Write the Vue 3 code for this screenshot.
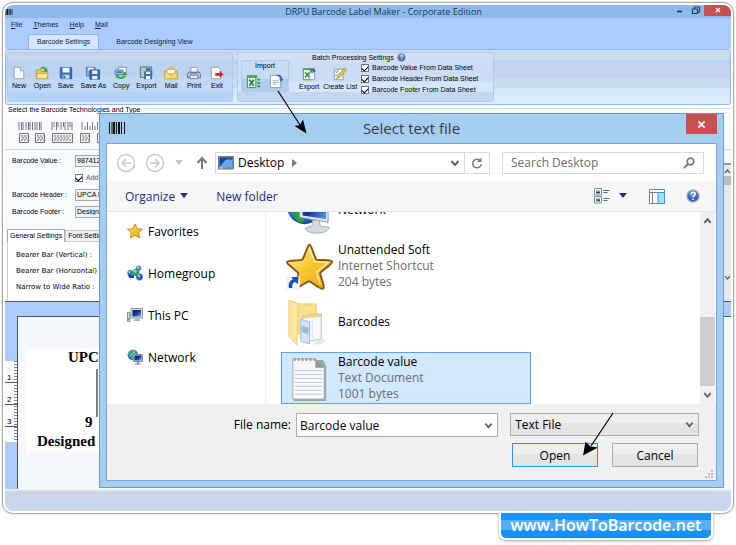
<script setup>
import { ref } from 'vue'

const menus = ['File', 'Themes', 'Help', 'Mail']
const fileTools = [
  { label: 'New', icon: 'page' },
  { label: 'Open', icon: 'open' },
  { label: 'Save', icon: 'disk' },
  { label: 'Save As', icon: 'disks' },
  { label: 'Copy', icon: 'copy' },
  { label: 'Export', icon: 'export' },
  { label: 'Mail', icon: 'mail' },
  { label: 'Print', icon: 'print' },
  { label: 'Exit', icon: 'exit' },
]
const sheetOptions = ref([
  { label: 'Barcode Value From Data Sheet', on: true },
  { label: 'Barcode Header From Data Sheet', on: true },
  { label: 'Barcode Footer From Data Sheet', on: true },
])
const addChecksum = ref(true)
const barcodeValue = ref('9874126')
const barcodeHeader = ref('UPCA B')
const barcodeFooter = ref('Designed')
const bearerLabels = ['Bearer Bar (Vertical) :', 'Bearer Bar (Horizontal)', 'Narrow to Wide Ratio :']
const places = [
  { label: 'Favorites', icon: 'star' },
  { label: 'Homegroup', icon: 'homegroup' },
  { label: 'This PC', icon: 'pc' },
  { label: 'Network', icon: 'network' },
]
const files = [
  { name: 'Network', icon: 'bignetwork', details: [] },
  { name: 'Unattended Soft', icon: 'bigstar', details: ['Internet Shortcut', '204 bytes'] },
  { name: 'Barcodes', icon: 'folder', details: [] },
  { name: 'Barcode value', icon: 'notepad', details: ['Text Document', '1001 bytes'], selected: true },
]
const fileName = ref('Barcode value')
const fileType = ref('Text File')
const search = ref('')
</script>

<template>
  <svg class="sprites" aria-hidden="true">
    <defs>
      <linearGradient id="gold" x1="0" y1="0" x2="1" y2="1">
        <stop offset="0" stop-color="#fff1a0" /><stop offset=".5" stop-color="#f8c62e" /><stop offset="1" stop-color="#eda413" />
      </linearGradient>
      <linearGradient id="screen" x1="0" y1="0" x2="1" y2="1">
        <stop offset="0" stop-color="#0b1c63" /><stop offset=".5" stop-color="#12379b" /><stop offset="1" stop-color="#6aa3ea" />
      </linearGradient>
      <radialGradient id="globe" cx=".4" cy=".3" r=".8">
        <stop offset="0" stop-color="#a9dcf5" /><stop offset=".6" stop-color="#2a6fc9" /><stop offset="1" stop-color="#123a8f" />
      </radialGradient>
      <radialGradient id="help" cx=".5" cy=".3" r=".7">
        <stop offset="0" stop-color="#6d9fe0" /><stop offset="1" stop-color="#1c48a0" />
      </radialGradient>
      <linearGradient id="sheet" x1="0" y1="0" x2="0" y2="1">
        <stop offset="0" stop-color="#f4f4f4" /><stop offset="1" stop-color="#ffffff" />
      </linearGradient>
    </defs>
    <symbol id="page" viewBox="0 0 16 16">
      <path d="M2.5 1.5h7l4 4v9h-11z" fill="#fdfdfe" stroke="#8e99ad" /><path d="M9.500 1.500v4h4" fill="#dde4ee" stroke="#8e99ad" />
    </symbol>
    <symbol id="open" viewBox="0 0 16 16">
      <path d="M1.500 4.500h5l1 2h7v8h-13z" fill="#f3c955" stroke="#c9962b" /><path d="M3 8.500h12l-2 6h-11.500z" fill="#fde798" stroke="#d2a339" />
      <path d="M5 4c2-4 6-4 7.500-1l1.500-1v5l-4.500-1 1.500-1.500c-1-2-3-2-6-.5z" fill="#35a83a" />
    </symbol>
    <symbol id="disk" viewBox="0 0 16 16">
      <path d="M1.500 2h13v12.500h-12l-1-1z" fill="#3571c1" stroke="#24508f" /><path d="M4 2h8v5.500h-8z" fill="#f4f8fd" /><path d="M4 10h8v4.500h-8z" fill="#c8d7ea" /><path d="M5 11h2v3h-2z" fill="#254b83" />
    </symbol>
    <symbol id="disks" viewBox="0 0 18 16">
      <path d="M1.500 1.500h10v10h-10z" fill="#83addd" stroke="#4879b9" /><path d="M3.500 2h6v3h-6z" fill="#f5f9fd" />
      <path d="M5.500 4.500h11v10.500h-11z" fill="#3571c1" stroke="#24508f" /><path d="M8 5h6v4h-6zM8 11.500h6v3.500h-6z" fill="#eef4fb" />
    </symbol>
    <symbol id="copy" viewBox="0 0 16 16">
      <path d="M5 1.500h9v6h-9z" fill="#fafcff" stroke="#7387a5" /><path d="M1.500 4.500h9v5h-9z" fill="#bdd2ea" stroke="#52709b" /><path d="M3 6h6v2h-6z" fill="#3a6aa9" />
      <path d="M2 10h4l-1 1.500c2 1.500 5 1 6-1.500l-1.500-.5 4-3 2 4-1.500-.3c-1.500 5-7 6-10.500 2.800l-1.500 1z" fill="#34b344" />
    </symbol>
    <symbol id="export" viewBox="0 0 16 16">
      <path d="M1.500 1h13v12h-13z" fill="#9cc0e6" stroke="#3c69a8" /><path d="M3 3h4v3h-4zM3 8h3v4h-3z" fill="#f1c84b" /><path d="M8 2.500h5v3h-5z" fill="#3d6bb0" />
      <path d="M6 6h9v9h-9z" fill="#2e65b4" /><path d="M8 6.500h5v3h-5zM8 11.500h5v3.500h-5z" fill="#f2f7fc" />
    </symbol>
    <symbol id="mail" viewBox="0 0 16 16">
      <path d="M1 6l7-5 7 5v8.500h-14z" fill="#f6cc50" stroke="#d8992a" /><path d="M3.500 4h9v5h-9z" fill="#fff" stroke="#d3ad57" /><path d="M1 6.500l7 4.500 7-4.500v8h-14z" fill="#fbd96c" stroke="#d8992a" stroke-width=".7" />
    </symbol>
    <symbol id="print" viewBox="0 0 16 16">
      <path d="M4.500 1.500h7v6h-7z" fill="#fff" stroke="#8b98ad" /><path d="M2 7h12l1.500 2.500v4h-15v-4z" fill="#b9c4d4" stroke="#5a687c" /><path d="M3.500 10.500h9v4h-9z" fill="#e8edf4" stroke="#68768d" /><path d="M4 8h8" stroke="#4f6180" />
    </symbol>
    <symbol id="exit" viewBox="0 0 16 16">
      <path d="M1.500 1.500h8l3 3v10h-11z" fill="#fdfdfd" stroke="#919aab" /><path d="M6 8h5v-2.500l4.500 4-4.500 4v-2.500h-5z" fill="#c62b22" />
    </symbol>
    <symbol id="excel" viewBox="0 0 16 16">
      <path d="M1 1h11v3h-11z" fill="#58aa58" /><path d="M1.500 3.500h9v11h-9z" fill="#f0faf0" stroke="#3a923f" /><path d="M3.500 6l5 6.500m0-6.500l-5 6.500" stroke="#2d8436" stroke-width="1.800" /><path d="M12 5h3v2h-3zM12 8.500h3v2h-3zM12 12h3v2h-3z" fill="#37943d" />
    </symbol>
    <symbol id="importpage" viewBox="0 0 16 16">
      <path d="M1.500 1.500h8l3 3v10h-11z" fill="#fff" stroke="#8d9bb2" /><path d="M4 7h6M4 9h6M4 11h4" stroke="#9bb0cd" /><path d="M8 1c4-1 6 1 6 4h1.500l-2.500 3.500-2.500-3.500h1.500c0-2-1-3-4-3z" fill="#2d67b9" />
    </symbol>
    <symbol id="excelout" viewBox="0 0 16 16">
      <path d="M1 1h13v2.500h-13z" fill="#58aa58" /><path d="M1.500 3h9v11.500h-9z" fill="#f0faf0" stroke="#3a923f" /><path d="M3.500 6l5 6m0-6l-5 6" stroke="#2d8436" stroke-width="1.500" /><path d="M8.500 6.500h6v8h-6z" fill="#f8fbff" stroke="#7d9cc6" /><path d="M9 5c1-3 3-3 4-2l1-1.500 1.500 4-4 .5 1-1.200c-1-1-2-.5-2 1z" fill="#2d67b9" />
    </symbol>
    <symbol id="list" viewBox="0 0 16 16">
      <path d="M1.500 2.500h10v12h-10z" fill="#fff" stroke="#8090a8" /><path d="M3 5l1 1.500 2-3M3 9l1 1.500 2-3M3 12.500l1 1 2-2.500" fill="none" stroke="#2a8f3a" /><path d="M7 7h3M7 10h2" stroke="#7890b4" /><path d="M13 1l2.500 2-7 8.500-2.500 1 .5-3z" fill="#f1c23c" stroke="#a5752b" stroke-width=".7" />
    </symbol>
    <symbol id="bars" viewBox="0 0 16 12">
      <path d="M.500 0v12M3 0v12M7.500 0v12M12.500 0v12M15.500 0v12" stroke="#111" /><path d="M5 0v12M10 0v12" stroke="#111" stroke-width="2" />
    </symbol>
    <symbol id="question" viewBox="0 0 16 16">
      <circle cx="8" cy="8" r="7" fill="url(#help)" stroke="#a8b2c4" stroke-width="1.500" /><path d="M5.800 6.200c0-3.400 4.900-3 4.700-.4-.1 1.500-2.400 1.600-2.400 3.700" fill="none" stroke="#fff" stroke-width="1.600" /><path d="M7.200 11h1.800v1.600h-1.800z" fill="#fff" />
    </symbol>
    <symbol id="chevdown" viewBox="0 0 10 10"><path d="M1.500 3l3.500 4 3.500-4" fill="none" stroke="#606368" stroke-width="2" /></symbol>
    <symbol id="chevup" viewBox="0 0 10 10"><path d="M1.500 7l3.500-4 3.500 4" fill="none" stroke="#55595f" stroke-width="2" /></symbol>
    <symbol id="caret" viewBox="0 0 10 6"><path d="M1 0h8l-4 5z" fill="currentColor" /></symbol>
    <symbol id="cross" viewBox="0 0 10 10"><path d="M1.500 1.500l7 7m0-7l-7 7" stroke="#fff" stroke-width="2" /></symbol>
    <symbol id="star" viewBox="0 0 16 16">
      <path d="M8 .800l2.200 4.900 5.300.5-4 3.600 1.300 5.300-4.800-2.800-4.700 2.800 1.200-5.300-4-3.600 5.300-.5z" fill="url(#gold)" stroke="#d08420" />
    </symbol>
    <symbol id="homegroup" viewBox="0 0 16 16">
      <circle cx="11.500" cy="3.200" r="2.800" fill="#5388ce" /><circle cx="3.200" cy="8" r="2.900" fill="#3a75c5" /><circle cx="12.500" cy="12" r="3.400" fill="#2f63b6" /><path d="M1 10h6v3h-5z" fill="#215095" />
      <circle cx="9" cy="7.500" r="3.400" fill="#36a353" /><circle cx="8.200" cy="6.500" r="1.400" fill="#9ae0a6" /><circle cx="11" cy="2.500" r="1" fill="#c1daf7" /><circle cx="2.500" cy="7" r="1" fill="#c1daf7" /><circle cx="12" cy="11" r="1.200" fill="#a6c9f1" />
    </symbol>
    <symbol id="pc" viewBox="0 0 16 16">
      <path d="M.500 5.500h2.500v9h-2.500z" fill="#d8dadb" stroke="#8b9198" /><path d="M1 11h1.500v2h-1.500z" fill="#4ebd42" /><path d="M4 1.500h11.500v9.500h-11.500z" fill="#dce0e5" stroke="#90969d" /><path d="M5.500 3h8.500v6.500h-8.500z" fill="url(#screen)" /><path d="M8 11.500h4l1.500 2.500h-7z" fill="#aeb4bb" />
    </symbol>
    <symbol id="network" viewBox="0 0 16 16">
      <circle cx="5.800" cy="5.800" r="5.300" fill="url(#globe)" /><path d="M2 3c2-2 4-2 5-1l-2 3-3 1zM3 8l3-1 1 3-2 1zM8 2l3 2-2 2z" fill="#3fae49" /><path d="M6.500 5.500h9v7h-9z" fill="#cfdcec" stroke="#7890b0" /><path d="M7.500 6.500h7v5h-7z" fill="url(#screen)" /><path d="M10 13h2v1.500h2v1h-6v-1h2z" fill="#7a8ca5" />
    </symbol>
    <symbol id="bignetwork" viewBox="0 0 48 48">
      <circle cx="19" cy="20" r="18" fill="url(#globe)" /><path d="M9 10l11-3 4 8-6 7-8-2zM3 22l12 1 4 12-7 1zM24 27l7 3-4 7z" fill="#2f9d3c" /><path d="M14 13l29-5v28l-29-5z" fill="#e3e8ee" stroke="#8d99a8" /><path d="M17 15l24-4v22l-24-4z" fill="url(#screen)" /><path d="M27 34h7l1 6 9 1c0 8-24 8-24 1l8-3z" fill="#d7dbe0" stroke="#a7abb0" />
    </symbol>
    <symbol id="bigstar" viewBox="0 0 48 48">
      <path d="M24 1.500c2 0 5 13 7 15.500 3 1 15-.5 16 2s-11 9.500-12 12c-.3 3 5.500 13.500 3 15.500s-12-7.500-14.500-7.500-11.500 8.500-14 6.500 3.500-12 3-14.500-12-9-11.500-11.500 13-1 15.500-2.500c2.500-2.500 5.500-15.500 7.500-15.500z" fill="url(#gold)" stroke="#8a5618" stroke-width="2" />
      <path d="M24 5l5 14 14 1-12 10 4 12" fill="none" stroke="#fff3b4" stroke-width="1.300" /><path d="M0 34h14v14h-14z" fill="#eef4fb" /><path d="M3 46c-1-5 1-8 4-8.500l-1.500-2.500 7.500-.5-1 7.500-2-2c-3 0-4 2-3.500 6z" fill="#1e50a8" />
    </symbol>
    <symbol id="folder" viewBox="0 0 48 48">
      <path d="M12 5h19v31h-19z" fill="#f7e18b" stroke="#e8d07c" /><path d="M17 17l19-2v26l-19 3z" fill="#f5f8fb" stroke="#b9c1ca" /><path d="M17 17l19-2v3l-19 2z" fill="#ead584" /><path d="M15 21l9 2v23l-9-3z" fill="#d5e4f4" stroke="#a9bccf" /><path d="M16 27l7 2v7l-7-2z" fill="#98bee6" /><path d="M27 22v18" stroke="#dce2e8" /><path d="M3 1l10 4-2 42-8-9z" fill="#fae69a" stroke="#e8d07c" /><path d="M36 40l5 2-5 4-10 1z" fill="#dadada" opacity=".6" />
    </symbol>
    <symbol id="notepad" viewBox="0 0 48 48">
      <path d="M8 5h30l3 7v35h-33z" fill="#9da2a7" /><path d="M7 4h23l9 9v32h-32z" fill="url(#sheet)" stroke="#a7a9ac" /><path d="M30 4v9h9z" fill="#8e9298" /><path d="M9 16h28M9 20h28M9 24h28M9 28h28M9 32h28M9 36h28M9 40h28" stroke="#b0c9e2" /><path d="M9 6v-3M13 6v-3M17 6v-3M21 6v-3M25 6v-3M29 6v-3" stroke="#8e9298" stroke-width="1.500" />
    </symbol>
  </svg>

  <main class="page">
    <div class="frame">
      <div class="app">
        <header class="titlebar">
          <svg class="app-logo"><use href="#bars" /></svg>
          <h1>DRPU Barcode Label Maker - Corporate Edition</h1>
          <div class="win-buttons">
            <button aria-label="Minimize"><svg viewBox="0 0 10 10"><path d="M2 6.500h5" stroke="#182b46" stroke-width="1.500" /></svg></button>
            <button aria-label="Restore"><svg viewBox="0 0 10 10"><path d="M3.500 4v-2h5v5h-2M1.500 4h5v4.500h-5z" fill="none" stroke="#213d63" stroke-width="1.200" /></svg></button>
            <button class="app-close" aria-label="Close"><svg viewBox="0 0 10 10"><path d="M3 3l4 4m0-4l-4 4" stroke="#fff" stroke-width="1.200" /></svg></button>
          </div>
        </header>
        <nav class="menubar">
          <a v-for="m in menus" :key="m" href="#"><u>{{ m[0] }}</u>{{ m.slice(1) }}</a>
        </nav>
        <div class="tabs">
          <button class="tab active">Barcode Settings</button>
          <button class="tab">Barcode Designing View</button>
        </div>
        <section class="ribbon">
          <div class="group tools">
            <button v-for="t in fileTools" :key="t.label" class="tool">
              <svg><use :href="'#' + t.icon" /></svg><span>{{ t.label }}</span>
            </button>
          </div>
          <div class="group batch">
            <div class="import">
              <span>Import</span>
              <div>
                <button aria-label="Import from Excel"><svg><use href="#excel" /></svg></button>
                <button aria-label="Import from text file"><svg><use href="#importpage" /></svg></button>
              </div>
            </div>
            <div class="batch-body">
              <div class="batch-title">Batch Processing Settings <svg><use href="#question" /></svg></div>
              <div class="batch-row">
                <button class="tool"><svg><use href="#excelout" /></svg><span>Export</span></button>
                <button class="tool"><svg><use href="#list" /></svg><span>Create List</span></button>
                <div class="checks">
                  <label v-for="o in sheetOptions" :key="o.label"><input v-model="o.on" type="checkbox" />{{ o.label }}</label>
                </div>
              </div>
            </div>
          </div>
        </section>

        <section class="technologies">
          <h2>Select the Barcode Technologies and Type</h2>
          <svg class="types" viewBox="0 0 88 22">
            <g stroke="#777">
              <path d="M1 0v8M3.500 0v8M5 0v8M8 0v8M10.500 0v8M12 0v8M14.500 0v8M17 0v8M19 0v8M21.500 0v8M23 0v8" />
              <path d="M34 0v8M36 0v5M38.500 0v8M40 0v5M43 0v8M45.500 0v5M47 0v8M50 0v8M52 0v5M54 0v8" />
              <path d="M64 0v8M67 4v4M69.500 0v8M72 4v4M74.500 0v8M77 4v4M79.500 0v8M82 4v4M84.500 0v8" />
            </g>
            <g fill="#eee" stroke="#777"><path d="M1.500 11.500h9v9h-9zM17.500 11.500h9v9h-9zM34.500 11.500h20v9h-20zM62.500 11.500h9v9h-9zM79.500 11.500h9v9h-9z" /></g>
            <g stroke="#777" stroke-dasharray="2 1"><path d="M3 14h7M4 16h5M3 18h7M19 14h7M20 16h6M19 18h7M36 14h17M37 16h15M36 18h17M64 14h7M65 16h6M64 18h7M81 14h7M82 17h6" /></g>
          </svg>
        </section>

        <section class="settings">
          <form class="fields" @submit.prevent>
            <div class="field"><label for="bv">Barcode Value :</label><input id="bv" v-model="barcodeValue" /></div>
            <div class="field"><label class="indent"><input v-model="addChecksum" type="checkbox" />Add</label></div>
            <div class="field"><label for="bh">Barcode Header :</label><input id="bh" v-model="barcodeHeader" /></div>
            <div class="field"><label for="bf">Barcode Footer :</label><input id="bf" v-model="barcodeFooter" /></div>
            <div class="subtabs"><button class="on" type="button">General Settings</button><button type="button">Font Setting</button></div>
            <div class="bearer"><span v-for="b in bearerLabels" :key="b">{{ b }}</span></div>
          </form>
          <div class="side-scroll">
            <svg><use href="#chevup" /></svg><i></i><svg class="end"><use href="#chevdown" /></svg>
          </div>
        </section>

        <section class="designer">
          <div class="ruler"><span>1</span><span>2</span><span>3</span></div>
          <div class="canvas">
            <div class="label">
              <strong class="upc">UPC</strong>
              <svg viewBox="0 0 6 48"><path d="M1 0v48" stroke="#000" /><path d="M4.500 0v48" stroke="#000" stroke-width="3" /></svg>
              <strong class="digit">9</strong>
              <strong class="designed">Designed</strong>
            </div>
          </div>
        </section>
        <footer class="status"></footer>
      </div>
    </div>
    <a class="site" href="#">www.HowToBarcode.net</a>

    <section class="dialog" role="dialog" aria-labelledby="dlg-title">
      <header class="dlg-title">
        <svg><use href="#bars" /></svg>
        <h2 id="dlg-title">Select text file</h2>
        <button aria-label="Close dialog"><svg><use href="#cross" /></svg></button>
      </header>
      <div class="dlg-body">
        <div class="address-row">
          <button class="round" aria-label="Back"><svg viewBox="0 0 20 20"><circle cx="10" cy="10" r="8.500" /><path d="M15 10h-9m4-4l-4 4 4 4" /></svg></button>
          <button class="round" aria-label="Forward"><svg viewBox="0 0 20 20"><circle cx="10" cy="10" r="8.500" /><path d="M5 10h9m-4-4l4 4-4 4" /></svg></button>
          <button class="recent" aria-label="Recent locations"><svg><use href="#caret" /></svg></button>
          <button class="up" aria-label="Up"><svg viewBox="0 0 12 14"><path d="M6 13v-11m-4.500 5l4.500-5 4.500 5" fill="none" stroke="#787878" stroke-width="2" /></svg></button>
          <div class="address">
            <svg class="desk" viewBox="0 0 16 14"><path d="M.500.500h15v12.500h-15z" fill="#8c939b" stroke="#777" /><path d="M1.500 1.500h13v9.500h-13z" fill="#174a9d" /><path d="M1.500 11l6-7c3-2 5 1 7-1v8z" fill="#61a8f0" /><path d="M2 12h3" stroke="#eee" /></svg>
            <span>Desktop</span>
            <svg class="tri" viewBox="0 0 5 8"><path d="M0 0l5 4-5 4z" fill="#777" /></svg>
            <button class="drop" aria-label="Previous locations"><svg><use href="#chevdown" /></svg></button>
            <button class="refresh" aria-label="Refresh"><svg viewBox="0 0 12 12"><path d="M9.500 4a4.300 4.300 0 1 0 .8 3" fill="none" stroke="#777" stroke-width="1.500" /><path d="M10.500.500v4.500h-4.500z" fill="#777" /></svg></button>
          </div>
          <div class="search">
            <input v-model="search" type="text" placeholder="Search Desktop" aria-label="Search Desktop" />
            <svg viewBox="0 0 12 12"><circle cx="7.500" cy="4.500" r="3.300" fill="none" stroke="#777" stroke-width="1.700" /><path d="M5 7l-4 4" stroke="#777" stroke-width="2" /></svg>
          </div>
        </div>
        <div class="toolbar">
          <button>Organize <svg class="caret"><use href="#caret" /></svg></button>
          <button>New folder</button>
          <span class="spacer"></span>
          <button class="view" aria-label="Change view">
            <svg viewBox="0 0 16 16"><path d="M.500.500h7v6.500h-7zM.500 8.500h7v6.500h-7z" fill="#fff" stroke="#7d8894" /><path d="M2 2.500h4v1.500h-4z" fill="#4aa0d8" /><path d="M2 4h4v1.500h-4z" fill="#1c4c6e" /><path d="M2 10.500h2v3h-2z" fill="#3aa541" /><path d="M4 10.500h2v1.500h-2z" fill="#d9502e" /><path d="M4 12h2v1.500h-2z" fill="#214fa8" /><path d="M9.500 2.500h6M9.500 4.500h4M9.500 10.500h6M9.500 12.500h4" stroke="#5d6670" /></svg>
            <svg class="caret"><use href="#caret" /></svg>
          </button>
          <button class="pane" aria-label="Preview pane"><svg viewBox="0 0 16 15"><path d="M.500.500h15v14h-15z" fill="#fff" stroke="#76808b" /><path d="M0 3.500h16M3.500 4v11" stroke="#76808b" /><path d="M9 3.500h6.500v11h-6.500z" fill="#a9dcff" stroke="#3c98e2" /></svg></button>
          <button class="help" aria-label="Help"><svg><use href="#question" /></svg></button>
        </div>
        <div class="browser">
          <nav class="places">
            <a v-for="p in places" :key="p.label" href="#"><svg><use :href="'#' + p.icon" /></svg>{{ p.label }}</a>
          </nav>
          <ul class="files">
            <li v-for="f in files" :key="f.name" :class="{ selected: f.selected }">
              <svg><use :href="'#' + f.icon" /></svg>
              <div><span>{{ f.name }}</span><small v-for="d in f.details" :key="d">{{ d }}</small></div>
            </li>
          </ul>
          <div class="scroll">
            <svg><use href="#chevup" /></svg><i></i><svg><use href="#chevdown" /></svg>
          </div>
        </div>
        <form class="dlg-foot" @submit.prevent>
          <div class="inputs">
            <label for="fname">File name:</label>
            <div class="combo name"><input id="fname" v-model="fileName" type="text" /><svg><use href="#chevdown" /></svg></div>
            <div class="combo type"><select v-model="fileType" aria-label="File type"><option>Text File</option></select><svg><use href="#chevdown" /></svg></div>
          </div>
          <div class="actions"><button class="primary" type="submit">Open</button><button type="button">Cancel</button></div>
          <svg class="grip" viewBox="0 0 8 8"><path d="M6 0h2v2h-2zM3 3h2v2h-2zM6 3h2v2h-2zM0 6h2v2h-2zM3 6h2v2h-2zM6 6h2v2h-2z" fill="#bdbdbd" /></svg>
        </form>
      </div>
    </section>

    <svg class="pointer to-dialog" viewBox="0 0 30 44" aria-hidden="true"><path d="M1 1l22 34" stroke="#000" stroke-width="1.200" /><path d="M29.500 43.500l-12-7.500 5.500-1 3-5.500z" /></svg>
    <svg class="pointer to-open" viewBox="0 0 32 44" aria-hidden="true"><path d="M31 1l-22 33" stroke="#000" stroke-width="1.200" /><path d="M1 43.500l2.500-14 5 5 7.500 1z" /></svg>
  </main>
</template>

<style>
body { background: #fff; overflow: hidden; }
</style>

<style scoped>
* { box-sizing: border-box; }
.sprites { position: absolute; width: 0; height: 0; }
.page { position: relative; padding: 2px 2px 5px; font-family: "Open Sans", "Noto Sans", sans-serif; font-size: 12px; color: #000; }
button, input, select { font: inherit; color: inherit; margin: 0; padding: 0; border: 0; background: none; border-radius: 0; outline: 0; }
a { color: inherit; text-decoration: none; }
h1, h2, ul { margin: 0; padding: 0; font-weight: 400; list-style: none; }
svg { display: block; flex: none; }

.frame { border: 1px solid #aaa; border-radius: 11px; padding: 2px; background: #fff; box-shadow: 0 0 2px #bbb; }
.app { border-radius: 8px; overflow: hidden; background: #f7fafe; font-family: "Liberation Sans", Arial, sans-serif; font-size: 7px; line-height: 10px; }
.titlebar { display: flex; align-items: center; height: 13px; background: #8cbbeb; }
.app-logo { width: 8px; height: 6px; }
.titlebar h1 { flex: 1; padding-left: 82px; text-align: center; font: 9px/13px "Open Sans", sans-serif; color: #1c3553; }
.win-buttons { display: flex; height: 13px; }
.win-buttons button { width: 16px; display: flex; justify-content: center; }
.win-buttons .app-close { width: 27px; height: 11px; background: #c75050; }
.win-buttons svg { width: 10px; height: 10px; }
.menubar { display: flex; gap: 11px; height: 16px; padding: 2px 6px; background: #accbfe; color: #17233c; }
.tabs { display: flex; height: 15px; padding-left: 23px; background: #accbfe; }
.tab { height: 15px; padding: 0 8px; color: #10203c; }
.tab.active { margin-right: 9px; background: #d6e5fb; border: 1px solid #93b5e6; border-bottom: 0; border-radius: 3px 3px 0 0; }
.ribbon { display: flex; gap: 4px; height: 56px; padding: 2px 1px; border: 1px solid #8eb9f0; border-radius: 3px; background: linear-gradient(#cbdcef 0 18%, #b9d4f7 18% 26%, #c4d3ee 26% 52%, #c9dcee 52% 70%, #d2e6fd 70% 86%, #dbeeff 86%); }
.group { height: 50px; border: 1px solid #b0ccec; border-radius: 3px; background: linear-gradient(#c5d5eb 0 16%, #bcd2f1 16% 50%, #bfd8f7 50% 82%, #b3d2f8 82%); }
.tools { display: flex; justify-content: space-between; width: 226px; padding: 13px 7px 0 3px; }
.tool { display: flex; flex-direction: column; align-items: center; gap: 1px; white-space: nowrap; }
.tool svg { width: 16px; height: 14px; }
.tool span { line-height: 10px; }
.batch { display: flex; width: 257px; gap: 10px; padding: 0 3px; background: linear-gradient(#d3dff3 0 20%, #cbdcf4 20% 60%, #d4e6fb 60% 82%, #c3d6f0 82%); }
.import { width: 48px; height: 32px; margin-top: 7px; border: 1px solid #b5cdea; border-radius: 2px; text-align: center; background: linear-gradient(#c6dbf4 0 60%, #afcdef 60%); }
.import div { display: flex; justify-content: space-around; margin-top: 3px; }
.import svg { width: 15px; height: 15px; }
.batch-title { display: flex; gap: 3px; align-items: center; height: 9px; padding-left: 13px; white-space: nowrap; }
.batch-title svg { width: 9px; height: 9px; }
.batch-row { display: flex; gap: 4px; align-items: flex-start; }
.batch-row .tool { padding-top: 5px; }
.checks label { display: flex; align-items: center; gap: 3px; height: 11px; white-space: nowrap; }
input[type="checkbox"] { appearance: none; display: grid; place-items: center; width: 8px; height: 8px; border: 1px solid #777; background: #fff; }
input[type="checkbox"]:checked::before { content: ""; width: 5px; height: 3px; border-left: 1px solid #000; border-bottom: 1px solid #000; transform: rotate(-45deg); }

.technologies { height: 45px; border-bottom: 1px solid #d2d6dc; background: linear-gradient(#fff 0 3px, #ddd 3px 4px, #f7fafe 4px); }
.technologies h2 { display: inline-block; padding: 0 3px; font-size: 7px; line-height: 10px; background: #fff; }
.types { width: 88px; height: 22px; margin: 7px 0 0 13px; }
.settings { display: flex; height: 152px; border-bottom: 1px solid #555; }
.fields { flex: 1; padding-top: 2px; }
.field { display: flex; align-items: center; height: 17px; padding-left: 7px; }
.field > label:first-child { width: 63px; white-space: nowrap; }
.field input:not([type="checkbox"]) { width: 60px; height: 12px; padding: 0 1px; border: 1px solid #aaa; background: #f1f1f1; }
.field .indent { display: flex; gap: 3px; padding-left: 63px; align-items: center; color: #555; }
.subtabs { display: flex; align-items: flex-end; height: 23px; padding-left: 2px; margin-top: -1px; }
.subtabs button { height: 12px; padding: 0 2px; border: 1px solid #ccc; background: #f0f0f0; }
.subtabs .on { height: 13px; border-color: #aaa; border-bottom: 0; background: #fff; }
.bearer { display: flex; flex-direction: column; gap: 6px; height: 59px; margin-left: 2px; padding: 8px; border-left: 1px solid #ccc; background: #fff; font-family: "DejaVu Sans", Verdana, sans-serif; white-space: nowrap; }
.side-scroll { display: flex; flex-direction: column; width: 9px; margin-top: 13px; padding-top: 3px; border-top: 2px solid #999; background: #e7e8ea; }
.side-scroll svg { width: 7px; height: 7px; align-self: flex-end; }
.side-scroll i { height: 9px; margin-top: 1px; background: #babcc4; }
.side-scroll .end { margin-top: auto; margin-bottom: 20px; }
.designer { display: flex; height: 189px; padding-top: 14px; background: #accbfe; border-bottom: 2px solid #e9e9e9; }
.ruler { width: 12px; height: 81px; margin-top: 45px; background: repeating-linear-gradient(#888 0 1px, transparent 1px 3px) right / 3px 100% no-repeat #f8faff; }
.ruler span { display: block; height: 22px; padding: 12px 0 0 2px; border-bottom: 1px solid #555; line-height: 10px; font-size: 8px; }
.canvas { flex: 1; border-top: 1px solid #555; border-left: 1px solid #555; background: #f5f9fe; padding: 32px 0 0 8px; }
.label { width: 120px; height: 103px; background: #fff; font: bold 15px/17px "Liberation Serif", serif; }
.label strong { display: block; }
.upc { padding-left: 42px; }
.label svg { width: 6px; height: 48px; margin: 3px 0 0 70px; }
.digit { padding-left: 59px; margin-top: -3px; }
.designed { padding-left: 11px; margin-top: 2px; }
.status { height: 20px; background: #c8d6ea; }

.site { display: block; width: 214px; height: 27px; margin: -1px 21px 0 auto; border: 2px solid #fff; border-top: 0; border-radius: 0 0 7px 7px; box-shadow: 0 1px 3px #999; background: linear-gradient(#1b94fb 0 30%, #57aefd 30% 68%, #1690fb 68%); color: #fff; font: 600 16px/24px "Open Sans", sans-serif; text-align: center; }

.dialog { position: absolute; top: 113px; left: 99px; right: 12px; padding: 0 6px 6px; border: 1px solid #6b98c8; background: #a5cdf0; }
.dlg-title { display: flex; align-items: flex-start; height: 29px; padding-left: 3px; }
.dlg-title > svg { width: 16px; height: 12px; margin-top: 8px; }
.dlg-title h2 { flex: 1; padding-left: 12px; text-align: center; font-size: 15px; line-height: 29px; color: #373c46; }
.dlg-title button { display: grid; place-items: center; width: 31px; height: 20px; background: #c75050; }
.dlg-title button svg { width: 9px; height: 9px; }
.dlg-body { border: 1px solid #7ba6d4; background: #fff; }
.address-row { display: flex; align-items: center; height: 37px; padding: 0 12px 0 9px; }
.round { margin-right: 9px; }
.round svg { width: 20px; height: 20px; fill: none; stroke: #c9c9c9; stroke-width: 1.5; }
.recent { color: #c4c4c4; margin-right: 12px; }
.recent svg, .toolbar .caret { width: 10px; height: 6px; }
.up svg { width: 12px; height: 14px; }
.address { display: flex; align-items: center; flex: 273; height: 22px; margin: 0 12px 0 7px; border: 1px solid #d9d9d9; }
.desk { width: 16px; height: 14px; margin: 0 4px 0 2px; }
.tri { width: 5px; height: 8px; margin-left: 8px; }
.drop { margin-left: auto; width: 14px; }
.drop svg { width: 10px; height: 10px; }
.refresh { display: grid; place-items: center; width: 25px; height: 20px; border-left: 1px solid #d9d9d9; }
.refresh svg { width: 12px; height: 12px; }
.search { display: flex; align-items: center; flex: 184; height: 22px; padding: 0 8px; border: 1px solid #d9d9d9; }
.search input { flex: 1; min-width: 0; }
.search input::placeholder { color: #6d6d6d; opacity: 1; }
.search svg { width: 12px; height: 12px; }
.toolbar { display: flex; align-items: center; height: 31px; padding: 0 16px 0 18px; background: #f5f6f8; border-bottom: 1px solid #e5e5e5; color: #1e2f78; }
.toolbar button { display: flex; align-items: center; gap: 4px; margin-right: 27px; }
.spacer { flex: 1; }
.toolbar .view { gap: 8px; margin-right: 21px; }
.view svg:first-child { width: 16px; height: 16px; }
.toolbar .pane { margin-right: 21px; }
.toolbar .pane svg { width: 16px; height: 15px; }
.toolbar .help { margin: 0; }
.toolbar .help svg { width: 14px; height: 14px; }
.browser { display: flex; height: 192px; overflow: hidden; }
.places { width: 159px; padding: 7px 0 0 20px; border-right: 1px solid #f0f0f0; }
.places a { display: flex; align-items: center; gap: 5px; height: 24px; margin-bottom: 18px; }
.places svg { width: 16px; height: 16px; }
.files { display: flex; flex-direction: column; justify-content: flex-end; flex: 1; padding-left: 15px; }
.files li { display: flex; align-items: center; flex: none; width: 250px; height: 52px; margin-top: 4px; padding-left: 4px; gap: 5px; border: 1px solid transparent; }
.files li.selected { background: #d1e8ff; border-color: #58a4ee; }
.files svg { width: 47px; height: 47px; }
.files span, .files small { display: block; font-size: 12px; line-height: 16px; }
.files small { color: #6d6d6d; }
.scroll { display: flex; flex-direction: column; align-items: center; width: 15px; margin-right: 1px; padding: 4px 0; background: #f0f0f0; }
.scroll svg { width: 9px; height: 10px; }
.scroll i { width: 15px; height: 69px; margin: auto 0 4px; background: #cdcdcd; }
.dlg-foot { position: relative; height: 76px; padding: 9px 17px 0 0; background: #f0f0f0; }
.inputs { display: flex; align-items: flex-start; }
.inputs > label { width: 189px; padding-right: 5px; text-align: right; line-height: 24px; }
.combo { display: flex; align-items: center; height: 24px; padding: 0 4px; border: 1px solid #adadad; background: #fff; }
.combo svg { width: 9px; height: 9px; }
.combo input, .combo select { flex: 1; min-width: 0; appearance: none; }
.name { flex: 203; margin-right: 12px; padding-left: 3px; }
.type { flex: 188; height: 23px; background: linear-gradient(#efefef 0 45%, #e4e4e4 45%); }
.actions { display: flex; justify-content: flex-end; gap: 14px; margin-top: 6px; padding-right: 1px; }
.actions button { width: 86px; height: 24px; border: 1px solid #adadad; background: linear-gradient(#eee 0 45%, #e4e4e4 45%); }
.actions .primary { border-color: #2f96f0; }
.grip { position: absolute; right: 3px; bottom: 2px; width: 8px; height: 8px; }
.pointer { position: absolute; pointer-events: none; }
.to-dialog { top: 90px; left: 277px; width: 30px; height: 44px; }
.to-open { top: 412px; left: 582px; width: 32px; height: 44px; }
</style>
